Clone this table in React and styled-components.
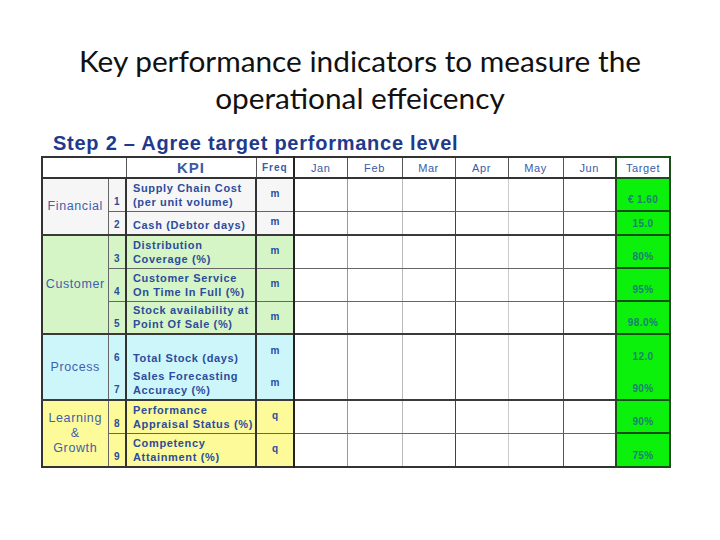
import React from "react";
import styled, { createGlobalStyle, css } from "styled-components";

const Global = createGlobalStyle`
  html, body { margin: 0; padding: 0; background: #ffffff; }
  body { font-family: "Liberation Sans", Arial, sans-serif; }
`;

const Slide = styled.div`
  width: 720px;
  height: 540px;
  background: #ffffff;
  display: flex;
  flex-direction: column;
  align-items: stretch;
  overflow: hidden;
`;

const Heading = styled.h1`
  margin: 0;
  padding-top: 42px;
  font-family: Lato, "Open Sans", sans-serif;
  font-weight: 400;
  font-size: 29.8px;
  line-height: 37px;
  color: #111111;
  text-align: center;
`;

const Figure = styled.div`
  margin: 16px 0 0 41px;
  display: flex;
  flex-direction: column;
  align-items: flex-start;
`;

const StepTitle = styled.div`
  font-family: "Liberation Sans", Arial, sans-serif;
  font-weight: 700;
  font-size: 20px;
  letter-spacing: 0.75px;
  line-height: 22px;
  color: #1f3a8c;
  margin-left: 12px;
  margin-bottom: 2px;
`;

const Table = styled.table`
  border-collapse: collapse;
  table-layout: fixed;
  width: 630px;
  font-family: "Liberation Sans", Arial, sans-serif;
  color: #2c4c9c;
  border: 2px solid #333;
`;

const groupBg = {
  fin: "#f6f6f6",
  cust: "#d6f5c6",
  proc: "#cdf6fb",
  learn: "#fdfa9a",
};

const Row = styled.tr`
  height: ${(p) => p.$h}px;
  ${(p) =>
    p.$thickTop &&
    css`
      & > td { border-top: 2px solid #3a3a3a; }
    `}
  ${(p) =>
    p.$noTop &&
    css`
      & > td { border-top-style: hidden; }
    `}
`;

const Cell = styled.td`
  padding: 0 3px 2px;
  border: 1px solid #666;
  overflow: hidden;
  white-space: nowrap;
  vertical-align: bottom;
  background: ${(p) => (p.$bg ? groupBg[p.$bg] : "#ffffff")};
`;

const HeadCell = styled.th`
  padding: 0;
  border: 1px solid #555;
  border-bottom: 2px solid #333;
  font-weight: ${(p) => (p.$bold ? 700 : 400)};
  font-size: ${(p) => p.$size || 11}px;
  letter-spacing: ${(p) => (p.$bold ? 1 : 0.6)}px;
  color: #3a5aa8;
  background: #ffffff;
  text-align: center;
  vertical-align: middle;
  ${(p) => p.$divider && css`border-left: 2px solid #222;`}
  ${(p) => p.$target && css`border: 2px solid #1b4d1b; border-bottom: 2px solid #1b4d1b;`}
`;

const Category = styled(Cell)`
  font-size: 12.5px;
  letter-spacing: 0.6px;
  line-height: 15px;
  text-align: center;
  vertical-align: middle;
  color: #3f5fae;
  padding: 0 1px;
  white-space: normal;
`;

const Num = styled(Cell)`
  font-size: 10px;
  font-weight: 700;
  text-align: center;
  padding: 0 0 3px;
  line-height: 12px;
  border-right: 2px solid #333;
`;

const Kpi = styled(Cell)`
  font-size: 11px;
  font-weight: 700;
  letter-spacing: 0.65px;
  line-height: 14px;
  padding: 0 2px 2px 6px;
  border-right: 2px solid #333;
`;

const Freq = styled(Cell)`
  font-size: 10px;
  font-weight: 700;
  text-align: center;
  vertical-align: middle;
  padding: 0 0 2px;
  border-right: 2px solid #222;
`;

const Month = styled.td`
  border: 1px solid ${(p) => p.$line || "#777"};
  border-top-color: #666;
  border-bottom-color: #666;
  background: #ffffff;
  padding: 0;
`;

const Target = styled.td`
  border: 2px solid #1b4d1b;
  background: #0bf10b;
  color: #1c7f74;
  font-size: 10px;
  font-weight: 700;
  letter-spacing: 0.4px;
  text-align: center;
  vertical-align: bottom;
  padding: 0 0 4px;
  line-height: 12px;
`;

const widths = [66, 18, 130, 38, 53, 55, 53, 53, 55, 53, 54];
const months = ["Jan", "Feb", "Mar", "Apr", "May", "Jun"];
const monthLines = ["#999", "#bbb", "#444", "#ccc", "#555", "#999"];

const rows = [
  { n: 1, kpi: ["Supply Chain Cost", "(per unit volume)"], f: "m", t: "€ 1.60", h: 33, g: "fin", cat: { label: ["Financial"], span: 2 }, top: true },
  { n: 2, kpi: ["Cash (Debtor days)"], f: "m", t: "15.0", h: 24, g: "fin" },
  { n: 3, kpi: ["Distribution", "Coverage (%)"], f: "m", t: "80%", h: 33, g: "cust", cat: { label: ["Customer"], span: 3 }, top: true },
  { n: 4, kpi: ["Customer Service", "On Time In Full (%)"], f: "m", t: "95%", h: 33, g: "cust" },
  { n: 5, kpi: ["Stock availability at", "Point Of Sale (%)"], f: "m", t: "98.0%", h: 33, g: "cust" },
  { n: 6, kpi: ["Total Stock (days)"], f: "m", t: "12.0", h: 33, g: "proc", cat: { label: ["Process"], span: 2 }, top: true },
  { n: 7, kpi: ["Sales Forecasting", "Accuracy (%)"], f: "m", t: "90%", h: 33, g: "proc", noTop: true },
  { n: 8, kpi: ["Performance", "Appraisal Status (%)"], f: "q", t: "90%", h: 33, g: "learn", cat: { label: ["Learning", "&", "Growth"], span: 2 }, top: true },
  { n: 9, kpi: ["Competency", "Attainment (%)"], f: "q", t: "75%", h: 34, g: "learn" },
];

export default function App() {
  return (
    <Slide>
      <Global />
      <Heading>
        Key performance indicators to measure the
        <br />
        operational effeicency
      </Heading>
      <Figure>
        <StepTitle>Step 2 – Agree target performance level</StepTitle>
        <Table>
          <colgroup>
            {widths.map((w, i) => (
              <col key={i} style={{ width: w }} />
            ))}
          </colgroup>
          <thead>
            <tr style={{ height: 21 }}>
              <HeadCell colSpan={2} />
              <HeadCell $bold $size={15}>KPI</HeadCell>
              <HeadCell $bold $size={10}>Freq</HeadCell>
              {months.map((m, i) => (
                <HeadCell key={m} $divider={i === 0}>{m}</HeadCell>
              ))}
              <HeadCell $target>Target</HeadCell>
            </tr>
          </thead>
          <tbody>
            {rows.map((r) => (
              <Row key={r.n} $h={r.h} $thickTop={r.top} $noTop={r.noTop}>
                {r.cat && (
                  <Category rowSpan={r.cat.span} $bg={r.g}>
                    {r.cat.label.map((l, i) => (
                      <React.Fragment key={i}>
                        {i > 0 && <br />}
                        {l}
                      </React.Fragment>
                    ))}
                  </Category>
                )}
                <Num $bg={r.g}>{r.n}</Num>
                <Kpi $bg={r.g}>
                  {r.kpi.map((k, i) => (
                    <React.Fragment key={i}>
                      {i > 0 && <br />}
                      {k}
                    </React.Fragment>
                  ))}
                </Kpi>
                <Freq $bg={r.g}>{r.f}</Freq>
                {months.map((m, i) => (
                  <Month key={m} $line={monthLines[i]} />
                ))}
                <Target>{r.t}</Target>
              </Row>
            ))}
          </tbody>
        </Table>
      </Figure>
    </Slide>
  );
}
